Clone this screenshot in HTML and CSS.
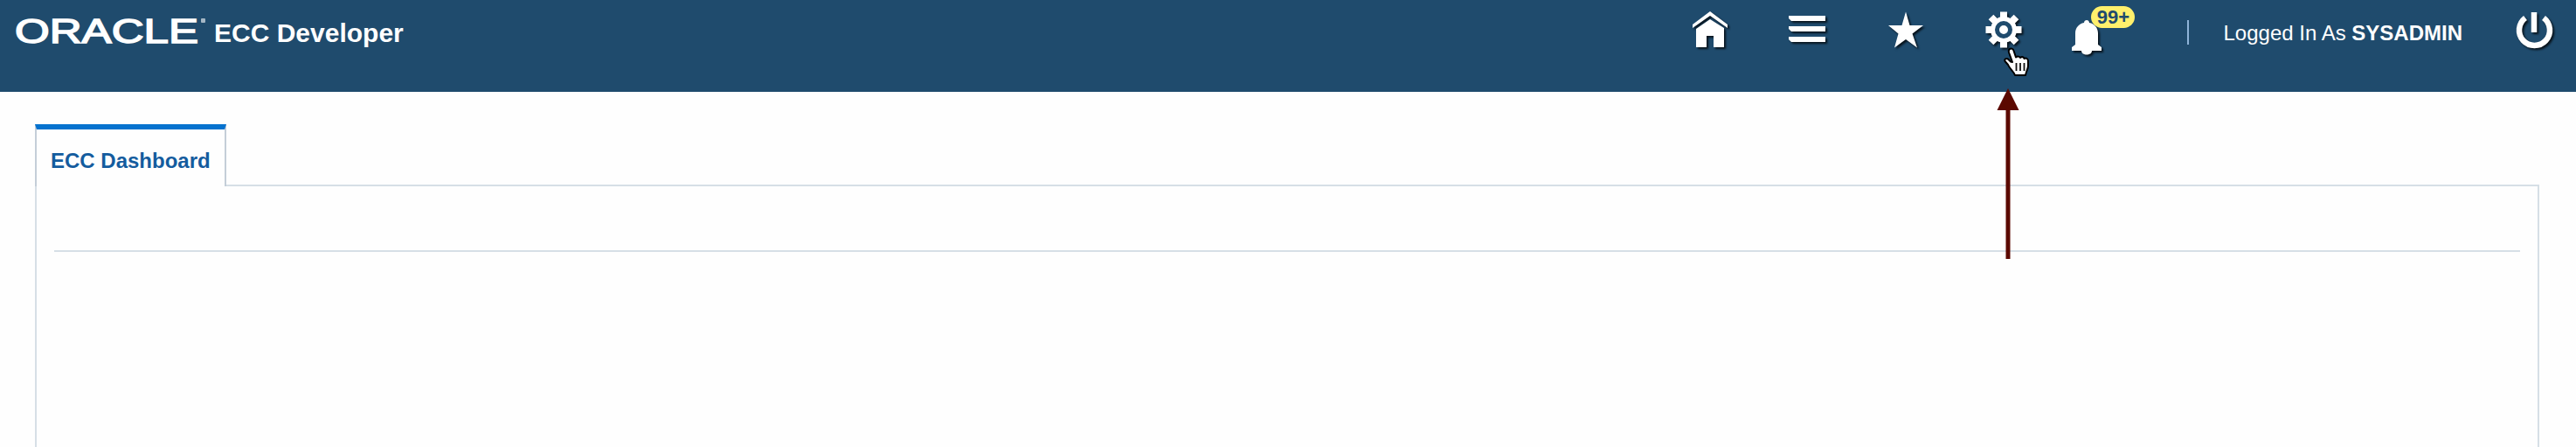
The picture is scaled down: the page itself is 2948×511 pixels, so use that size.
FILE: index.html
```html
<!DOCTYPE html>
<html lang="en">
<head>
<meta charset="utf-8">
<title>ECC Developer</title>
<link rel="stylesheet" href="styles.css">
</head>
<body>
<header class="header">
  <div class="brand">
    <svg class="logo" width="222" height="48" viewBox="0 0 222 48">
      <text class="logo-text" x="1" y="38.500" textLength="210" lengthAdjust="spacingAndGlyphs">ORACLE</text>
      <rect class="logo-mark" x="214" y="11" width="5" height="5" rx="1"/>
    </svg>
    <h1 class="title">ECC Developer</h1>
  </div>
  <nav class="actions">
    <svg class="icon" viewBox="0 0 44 44">
      <path d="M1 15 21 0 41 15V19L21 5 1 19ZM5 20 21 9 37 19V41H25V28H17V41H5Z"/>
    </svg>
    <svg class="icon" viewBox="0 0 44 44">
      <path d="M-1 5H41V11H2L-1 8ZM-1 17H41V23H2L-1 20ZM-1 29H41V35H2L-1 32Z"/>
    </svg>
    <svg class="icon" viewBox="0 0 44 44">
      <path d="M21 0.500 25.500 16H41L28.500 25.500 34 41.500 21 32 8 41.500 12.500 25.500 1 16H16.500Z"/>
    </svg>
    <div class="gear">
      <svg class="icon" viewBox="0 0 44 44">
        <g transform="translate(21 21)">
          <path d="M-4-20.500H4V20.500H-4ZM-20.500-4V4H20.500V-4Z"/>
          <path transform="rotate(45)" d="M-4-20.500H4V20.500H-4ZM-20.500-4V4H20.500V-4Z"/>
          <circle r="15"/>
          <circle class="gear-ring" r="7.500"/>
        </g>
      </svg>
      <svg class="cursor" width="34" height="36" viewBox="0 0 34 36">
        <path class="hand" d="M8 3C10 2 12 3 12.500 5L15 12.500C17 11 19 11.500 20 13C22 11.500 24 12 24.500 14C27 13 29 14 29 17V22C29 26 27 28 26 33H14C13 29 8 26 6 21L2.500 17C1.500 14.500 4 13.500 6 14.500L9 17.500 11 18 7 7C6.500 5 7 3.500 8 3Z"/>
        <path class="hand-lines" d="M15.500 19V28M20 19V28M24.500 19V28"/>
      </svg>
      <svg class="arrow" width="26" height="198" viewBox="0 0 26 198">
        <path d="M13 0 25.500 25H15.500V195H10.500V25H.5Z"/>
      </svg>
    </div>
    <div class="bell">
      <svg class="icon" viewBox="0 0 44 44">
        <path d="M19 3C19-1 25-1 25 3C31 4 35 9 35 15V28L39 31V35H28C28 41 16 41 16 35H5V31L9 28V15C9 9 13 4 19 3Z"/>
      </svg>
      <span class="badge">99+</span>
    </div>
    <span class="divider"></span>
    <span class="user">Logged In As <b>SYSADMIN</b></span>
    <svg class="icon power" viewBox="0 0 44 44">
      <path d="M10 7.500A17.500 17.500 0 1 0 31 7.500M20 1V24"/>
    </svg>
  </nav>
</header>
<main class="content">
  <div class="tabs"><a class="tab">ECC Dashboard</a></div>
  <section class="panel"><hr class="rule"></section>
</main>
</body>
</html>
```
FILE: styles.css
```css
* { box-sizing: border-box; }
body {
  margin: 0;
  height: 511px;
  overflow: hidden;
  display: flex;
  flex-direction: column;
  background: #fefefe;
  font-family: "Liberation Sans", Arial, sans-serif;
}
.header {
  height: 105px;
  flex: none;
  display: flex;
  justify-content: space-between;
  align-items: flex-start;
  padding-right: 24px;
  background: #1f4b6d;
  color: #fff;
}
.brand { display: flex; padding: 10px 0 0 16px; }
.logo { display: block; margin-right: 7px; overflow: visible; }
.logo-text { font-size: 38px; fill: #fff; stroke: #fff; stroke-width: 1.5px; }
.logo-mark { fill: #a5b7c5; }
.title { margin: 11px 0 0; font-size: 30px; line-height: 34px; font-weight: bold; }
.actions { display: flex; align-items: flex-start; gap: 68px; padding-top: 13px; }
.icon {
  display: block;
  flex: none;
  width: 44px;
  height: 44px;
  overflow: visible;
  fill: #fff;
  filter: drop-shadow(2px 2px 1px rgba(0, 0, 0, .75));
}
.gear { position: relative; }
.gear-ring { fill: #fff; stroke: #1f4b6d; stroke-width: 5px; }
.cursor { position: absolute; left: 20px; top: 40px; z-index: 2; }
.hand { fill: #fff; stroke: #000; stroke-width: 2px; stroke-linejoin: round; }
.hand-lines { stroke: #111; stroke-width: 1.8px; }
.arrow { position: absolute; left: 13px; top: 88px; fill: #5b0900; z-index: 1; }
.bell { position: relative; margin-left: -18px; padding-top: 10px; }
.badge {
  position: absolute;
  left: 27px;
  top: -6px;
  width: 50px;
  height: 25px;
  padding-left: 2px;
  border-radius: 13px;
  background: #fff06c;
  color: #1f4b6d;
  font-size: 22px;
  font-weight: bold;
  line-height: 25px;
  text-align: center;
}
.divider { width: 2px; height: 28px; margin: 10px -28px 0 25px; background: #8fb4d9; }
.user { margin: 11px -6px 0 0; font-size: 24px; line-height: 28px; white-space: nowrap; }
.power { fill: none; stroke: #fff; stroke-width: 6.5px; stroke-linecap: butt; }
.content { flex: 1; display: flex; flex-direction: column; padding: 37px 42px 0 40px; }
.tabs { display: flex; }
.tab {
  position: relative;
  width: 219px;
  height: 71px;
  padding: 22px 0 0 16px;
  border: solid #c4ced8;
  border-width: 6px 2px 0;
  border-top-color: #0572ce;
  background: #fefefe;
  color: #145c9e;
  font-size: 24px;
  font-weight: bold;
  line-height: 28px;
  white-space: nowrap;
}
.panel { flex: 1; margin-top: -2px; padding: 73px 20px 0; border: 2px solid #d6dfe6; border-bottom: 0; }
.tabs { position: relative; z-index: 1; }
.rule { height: 2px; margin: 0; border: 0; background: #d6dfe6; }
```
